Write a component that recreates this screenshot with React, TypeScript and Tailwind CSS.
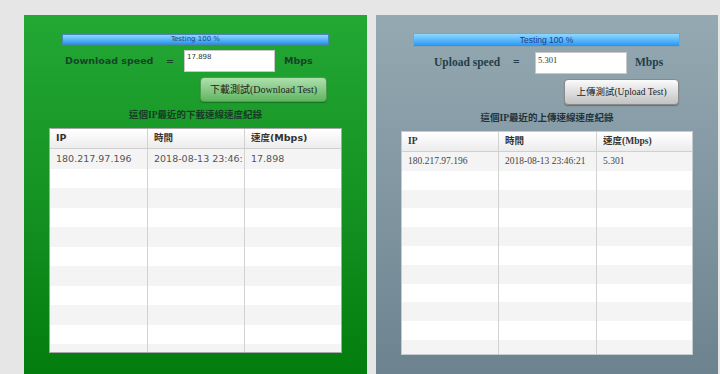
import React from "react";

const serif = "font-['Liberation_Serif','Noto_Sans_CJK_TC',serif]";
const sans = "font-['DejaVu_Sans','Noto_Sans_CJK_TC',sans-serif]";

type TableProps = {
  font: string;
  widths: number[];
  rowH: number;
  row: string[];
  headBold: string;
  cellText: string;
  border: string;
  width: string;
  height: string;
};

function RecordTable({ font, widths, rowH, row, headBold, cellText, border, width, height }: TableProps) {
  const rows = Array.from({ length: 11 });
  return (
    <div className={`${width} ${height} ${border} border bg-white overflow-hidden flex flex-col ${font}`}>
      {/* header */}
      <div className="flex h-[20px] shrink-0 bg-gradient-to-b from-[#ffffff] to-[#ececec] border-b border-[#d0d0d0]">
        {["IP", "時間", "速度(Mbps)"].map((h, i) => (
          <div
            key={h}
            style={{ width: widths[i] }}
            className={`flex items-center pl-[6px] ${headBold} ${i < 2 ? "border-r border-[#d2d2d2]" : ""}`}
          >
            {h}
          </div>
        ))}
      </div>
      {/* body */}
      <div className="flex-1 overflow-hidden">
        {rows.map((_, r) => (
          <div
            key={r}
            style={{ height: rowH }}
            className={`flex shrink-0 ${r % 2 === 0 ? "bg-[#f4f4f4]" : "bg-white"}`}
          >
            {[0, 1, 2].map((c) => (
              <div
                key={c}
                style={{ width: widths[c] }}
                className={`flex items-center pl-[6px] overflow-hidden whitespace-nowrap ${cellText} ${c < 2 ? "border-r border-[#d2d2d2]" : ""}`}
              >
                {r === 0 ? row[c] : ""}
              </div>
            ))}
          </div>
        ))}
      </div>
    </div>
  );
}

function DownloadPanel() {
  return (
    <div className={`w-[343px] h-[372px] shrink-0 bg-gradient-to-b from-[#23a834] to-[#017c0c] flex flex-col ${sans}`}>
      {/* progress */}
      <div className="ml-[38px] mt-[19px] w-[267px] h-[11px] border border-[#4a86b8] bg-gradient-to-b from-[#8dd8ff] to-[#1b96f2] flex items-center justify-center text-[7px] leading-none text-[#28407a]">
        Testing 100 %
      </div>
      {/* speed row */}
      <div className="ml-[41px] mt-[5px] h-[22px] flex items-center text-[9.5px] font-bold text-[#17442c]">
        <span className="w-[100px]">Download speed</span>
        <span className="w-[19px] pl-[1px]">=</span>
        <div className="w-[91px] h-[22px] bg-white border border-[#c8c8c8] pl-[2px] pt-[3px] text-[7px] font-normal text-[#333] leading-none">
          17.898
        </div>
        <span className="ml-[9px]">Mbps</span>
      </div>
      {/* button */}
      <button className={`ml-[176px] mt-[5px] w-[127px] h-[25px] rounded-[4px] border border-[#4f9a4f] bg-gradient-to-b from-[#aee0ae] to-[#5fb660] shadow-[0_1px_1px_rgba(0,0,0,0.25)] text-[10px] text-[#1e1e1e] ${serif}`}>
        下載測試(Download Test)
      </button>
      {/* caption */}
      <div className={`mt-[7px] h-[12px] leading-[12px] text-center text-[9.5px] font-bold text-[#173a26] ${serif}`}>
        這個IP最近的下載速線速度紀錄
      </div>
      <div className="ml-[25px] mt-[7px]">
        <RecordTable
          font={sans}
          widths={[98, 97, 96]}
          rowH={19.5}
          row={["180.217.97.196", "2018-08-13 23:46:", "17.898"]}
          headBold="text-[9.5px] font-bold text-[#333]"
          cellText="text-[9.5px] text-[#555]"
          border="border-[#a8a8a8]"
          width="w-[293px]"
          height="h-[225px]"
        />
      </div>
    </div>
  );
}

function UploadPanel() {
  return (
    <div className={`w-[342px] h-[372px] shrink-0 bg-gradient-to-b from-[#95a9b2] to-[#6b828e] flex flex-col ${serif}`}>
      {/* progress */}
      <div className="ml-[37px] mt-[18px] w-[267px] h-[14px] border border-[#8aa0b0] bg-gradient-to-b from-[#8dd8ff] to-[#1b96f2] flex items-center justify-center text-[8.5px] leading-none text-[#1f3a86] font-['Liberation_Sans',sans-serif]">
        Testing 100 %
      </div>
      {/* speed row */}
      <div className="ml-[58px] mt-[5px] h-[22px] flex items-center text-[11.5px] font-bold text-[#243e48]">
        <span className="w-[75px]">Upload speed</span>
        <span className="w-[26px] pl-[4px]">=</span>
        <div className="w-[92px] h-[22px] bg-white border border-[#c8c8c8] pl-[2px] pt-[3px] text-[8.5px] font-normal text-[#333] leading-none">
          5.301
        </div>
        <span className="ml-[8px]">Mbps</span>
      </div>
      {/* button */}
      <button className="ml-[188px] mt-[5px] w-[115px] h-[26px] rounded-[4px] border border-[#8a8a8a] bg-gradient-to-b from-[#fbfbfb] to-[#c2c2c2] shadow-[0_1px_1px_rgba(0,0,0,0.3)] text-[9.5px] text-[#222]">
        上傳測試(Upload Test)
      </button>
      {/* caption */}
      <div className="mt-[7px] h-[12px] leading-[12px] text-center text-[9.5px] font-bold text-[#1f333b]">
        這個IP最近的上傳速線速度紀錄
      </div>
      <div className="ml-[25px] mt-[7px]">
        <RecordTable
          font={serif}
          widths={[97, 98, 95]}
          rowH={18.8}
          row={["180.217.97.196", "2018-08-13 23:46:21", "5.301"]}
          headBold="text-[9.5px] font-bold text-[#333]"
          cellText="text-[9.5px] text-[#444]"
          border="border-[#c4ccd0]"
          width="w-[292px]"
          height="h-[224px]"
        />
      </div>
    </div>
  );
}

export default function App() {
  return (
    <div className="w-[720px] h-[374px] overflow-hidden bg-[#e6e6e6] flex items-start gap-[9px] pl-[24px] pt-[15px]">
      <DownloadPanel />
      <UploadPanel />
    </div>
  );
}
